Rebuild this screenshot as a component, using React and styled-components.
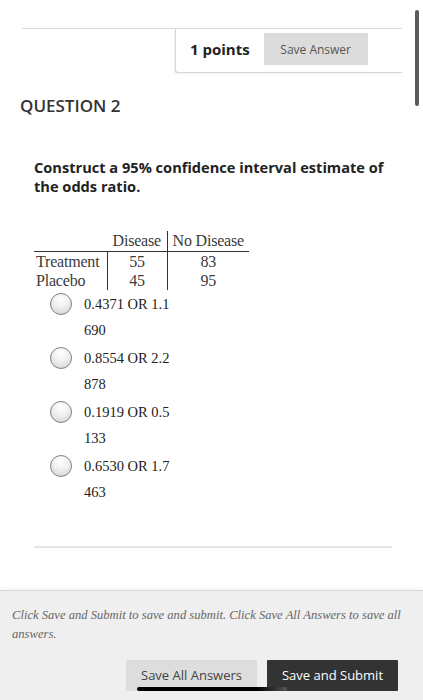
import React from "react";
import styled, { createGlobalStyle } from "styled-components";

const Global = createGlobalStyle`
  html, body { margin: 0; padding: 0; background: #fff; }
  body { font-family: "Open Sans", "Liberation Sans", sans-serif; color: #333; }
  * { box-sizing: border-box; }
`;

const Page = styled.div`
  position: relative;
  width: 423px;
  min-height: 700px;
  overflow: hidden;
`;

const Scrollbar = styled.div`
  position: absolute;
  top: 10px;
  right: 4px;
  width: 4px;
  height: 96px;
  border-radius: 2px;
  background: #5a5a5a;
`;

const Header = styled.div`
  margin: 28px 21px 0 22px;
  border-top: 1px solid #dcdcdc;
`;

const PointsBox = styled.div`
  margin-left: 153px;
  height: 44px;
  display: flex;
  align-items: flex-start;
  padding: 4px 0 0 14px;
  border-left: 1px solid #d6d6d6;
  border-bottom: 1px solid #d6d6d6;
  border-bottom-left-radius: 3px;
  box-shadow: -1px 1px 2px rgba(0, 0, 0, 0.06);
`;

const Points = styled.span`
  font-weight: 700;
  font-size: 15px;
  line-height: 32px;
  color: #222;
  margin-right: 14px;
`;

const SaveAnswer = styled.button`
  width: 104px;
  height: 32px;
  border: none;
  background: #dcdcdc;
  color: #555;
  font-family: "Open Sans", sans-serif;
  font-size: 12px;
  padding: 0;
`;

const QuestionTitle = styled.h2`
  margin: 23px 0 0 20px;
  font-size: 17px;
  line-height: 20px;
  font-weight: 600;
  color: #333;
`;

const Prompt = styled.p`
  margin: 42px 20px 0 34px;
  font-size: 14.6px;
  line-height: 19px;
  font-weight: 700;
  color: #222;
`;

const Table = styled.table`
  margin: 35px 0 0 34px;
  border-collapse: collapse;
  font-family: "Liberation Serif", "Times New Roman", serif;
  font-size: 16px;
  color: #3a3a3a;
  letter-spacing: -0.2px;
`;

const Cell = styled.td`
  height: ${(p) => (p.$head ? "20px" : "19px")};
  padding: 0 2px;
  line-height: 19px;
  text-align: ${(p) => (p.$left ? "left" : "center")};
  border-right: ${(p) => (p.$divider ? "1.5px solid #333" : "none")};
  border-bottom: ${(p) => (p.$head ? "1.5px solid #333" : "none")};
  width: ${(p) => p.$w}px;
  vertical-align: middle;
  white-space: nowrap;
`;

const Options = styled.div`
  margin: 1px 0 0 50px;
  display: flex;
  flex-direction: column;
  gap: 2px;
`;

const Option = styled.label`
  display: flex;
  align-items: flex-start;
  gap: 12px;
`;

const Radio = styled.span`
  flex: none;
  width: 22px;
  height: 22px;
  margin-top: 2px;
  border-radius: 50%;
  border: 1px solid #7f7f7f;
  background: radial-gradient(circle at 50% 25%, #ffffff 0%, #f0f0f0 45%, #cfcfcf 100%);
`;

const OptionText = styled.span`
  font-family: "Liberation Serif", "Times New Roman", serif;
  font-size: 14.5px;
  line-height: 26px;
  color: #222;
`;

const Separator = styled.hr`
  margin: 41px 31px 0 34px;
  border: none;
  height: 2px;
  background: #e6e6e6;
`;

const Footer = styled.div`
  position: relative;
  margin-top: 42px;
  background: #efefef;
  border-top: 1px solid #d9d9d9;
  box-shadow: 0 -1px 3px rgba(0, 0, 0, 0.06);
  padding: 15px 14px 12px 12px;
`;

const Note = styled.p`
  margin: 0;
  font-family: "Liberation Serif", Georgia, serif;
  font-style: italic;
  font-size: 12.6px;
  line-height: 19px;
  color: #666;
`;

const Buttons = styled.div`
  display: flex;
  justify-content: flex-end;
  gap: 10px;
  margin: 16px 11px 0 0;
`;

const Button = styled.button`
  width: 131px;
  height: 31px;
  border: none;
  border-radius: 1px;
  padding: 0;
  font-family: "Open Sans", sans-serif;
  font-size: 13px;
  background: ${(p) => (p.$primary ? "#333333" : "#dddddd")};
  color: ${(p) => (p.$primary ? "#ffffff" : "#444")};
`;

const HomeBar = styled.div`
  position: absolute;
  left: 137px;
  top: 96px;
  width: 150px;
  height: 4px;
  border-radius: 2px;
  background: linear-gradient(90deg, #000 0%, #000 80%, #555 100%);
`;

const options = [
  ["0.4371 OR 1.1", "690"],
  ["0.8554 OR 2.2", "878"],
  ["0.1919 OR 0.5", "133"],
  ["0.6530 OR 1.7", "463"],
];

export default function App() {
  return (
    <Page>
      <Global />
      <Scrollbar />
      <Header>
        <PointsBox>
          <Points>1 points</Points>
          <SaveAnswer>Save Answer</SaveAnswer>
        </PointsBox>
      </Header>
      <QuestionTitle>QUESTION 2</QuestionTitle>
      <Prompt>Construct a 95% confidence interval estimate of the odds ratio.</Prompt>
      <Table>
        <tbody>
          <tr>
            <Cell $head $w={73} $left></Cell>
            <Cell $head $divider $w={60}>Disease</Cell>
            <Cell $head $w={82}>No Disease</Cell>
          </tr>
          <tr>
            <Cell $left $divider $w={73}>Treatment</Cell>
            <Cell $divider $w={60}>55</Cell>
            <Cell $w={82}>83</Cell>
          </tr>
          <tr>
            <Cell $left $divider $w={73}>Placebo</Cell>
            <Cell $divider $w={60}>45</Cell>
            <Cell $w={82}>95</Cell>
          </tr>
        </tbody>
      </Table>
      <Options>
        {options.map(([a, b]) => (
          <Option key={a + b}>
            <Radio />
            <OptionText>
              {a}
              <br />
              {b}
            </OptionText>
          </Option>
        ))}
      </Options>
      <Separator />
      <Footer>
        <Note>
          Click Save and Submit to save and submit. Click Save All Answers to save all answers.
        </Note>
        <Buttons>
          <Button>Save All Answers</Button>
          <Button $primary>Save and Submit</Button>
        </Buttons>
        <HomeBar />
      </Footer>
    </Page>
  );
}
